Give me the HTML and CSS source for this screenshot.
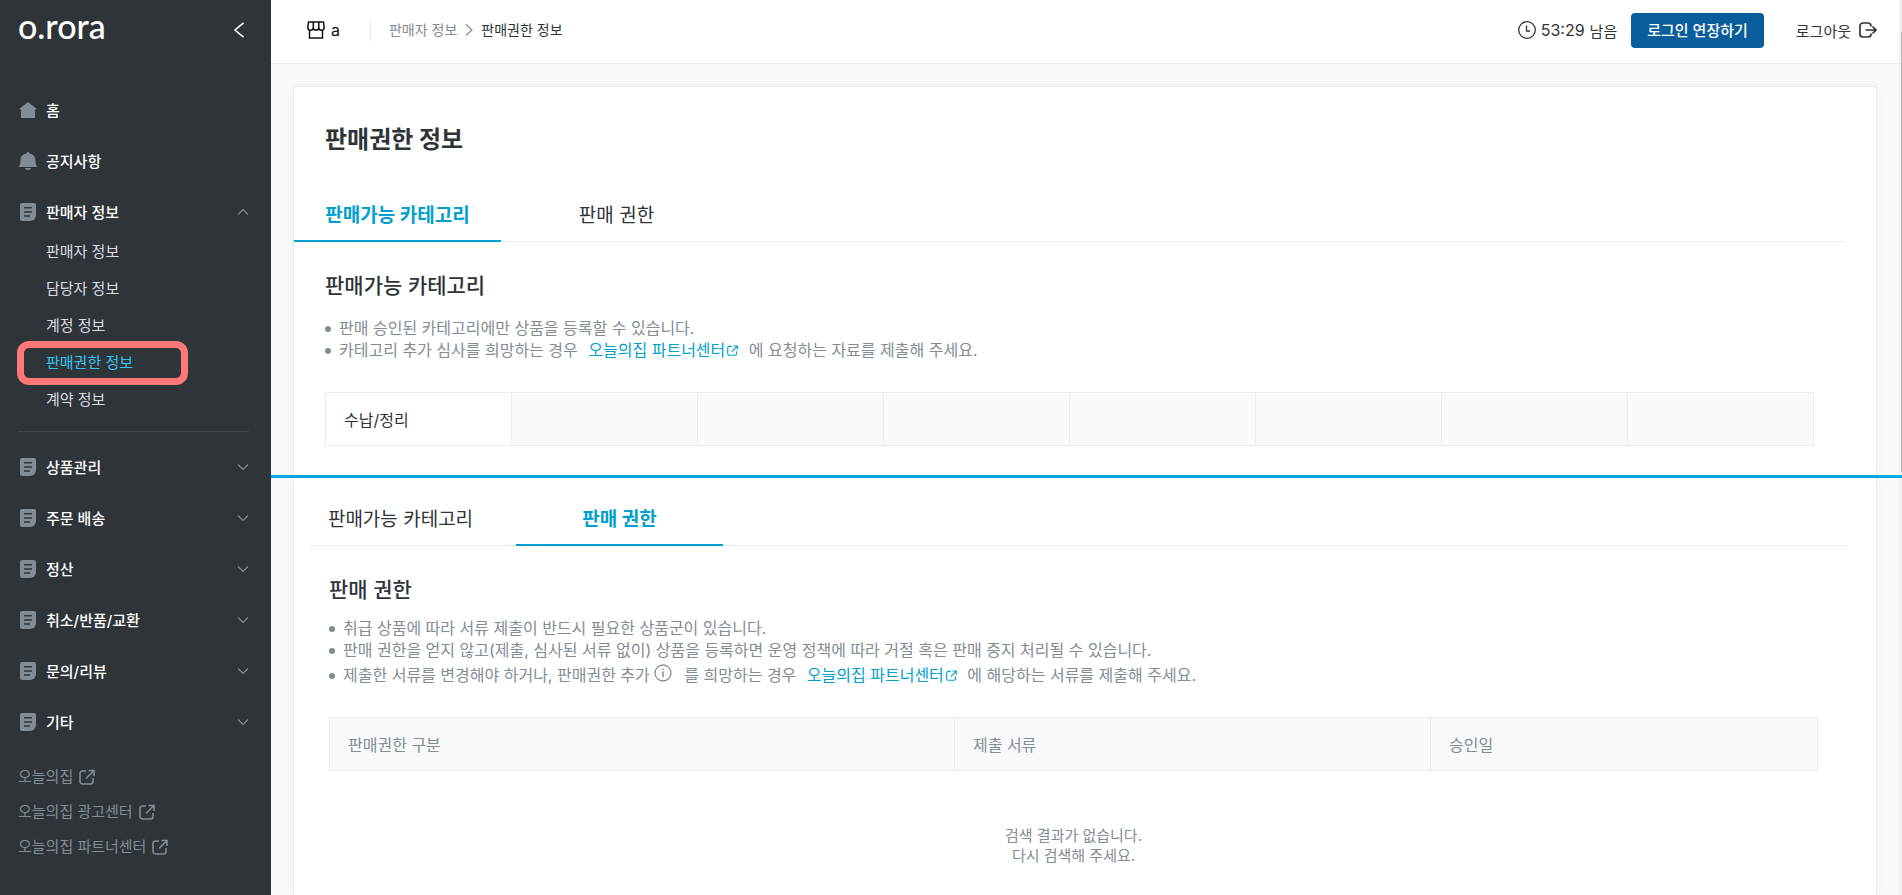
FILE: index.html
```html
<!DOCTYPE html>
<html lang="ko">

<head>
  <meta charset="UTF-8" />
  <title>판매권한 정보 - o.rora</title>
  <meta name="viewport" content="width=device-width, initial-scale=1.0" />
  <link rel="stylesheet" href="styles.css">
</head>

<body>
  <!-- 공용 아이콘 -->
  <svg class="sprite" aria-hidden="true">
    <symbol id="icon-doc" viewBox="0 0 18 18">
      <path fill="#828c94" d="M3 0h12a2 2 0 0 1 2 2v10a6 6 0 0 1-6 6H3a2 2 0 0 1-2-2V2a2 2 0 0 1 2-2z" />
      <path stroke="#2f3438" stroke-width="1.4" d="M5 4.8h8M5 9h8M5 13h6" />
    </symbol>
    <symbol id="icon-down" viewBox="0 0 12 8">
      <path fill="none" stroke="#828c94" stroke-width="1.2" d="M1 1.5l5 5 5-5" />
    </symbol>
    <symbol id="icon-link" viewBox="0 0 16 16">
      <path fill="none" stroke="currentColor" stroke-width="1.6" d="M7 2H3.5A2.5 2.5 0 0 0 1 4.5v8A2.5 2.5 0 0 0 3.5 15h8a2.5 2.5 0 0 0 2.5-2.5V9M9.5 1.5H15V7M14.5 2L7 9.5" />
    </symbol>
  </svg>

  <aside class="sidebar">
    <div class="sidebar-top">
      <a class="logo" href="#">o.rora</a>
      <button class="fold-btn" aria-label="메뉴 접기">
        <svg width="12" height="16" viewBox="0 0 12 16"><path fill="none" stroke="#fff" stroke-width="1.6" d="M10.5 0.8L2 8l8.5 7.2" /></svg>
      </button>
    </div>

    <nav>
      <ul class="menu">
        <li>
          <a class="menu-item" href="#">
            <svg class="menu-icon" viewBox="0 0 18 18"><path fill="#828c94" d="M9 1l8.5 6.8-.6 1H16V16a1 1 0 0 1-1 1H3a1 1 0 0 1-1-1V8.8h-.9l-.6-1z" /></svg>
            홈
          </a>
        </li>
        <li>
          <a class="menu-item" href="#">
            <svg class="menu-icon" viewBox="0 0 18 18"><path fill="#828c94" d="M9 0c.8 0 1.2.5 1.3 1.2C14.500 2 16.500 5 16.500 8.500c0 2.500.3 4 1.200 5.300.4.700.2 1.200-.6 1.200H.9c-.8 0-1-.5-.6-1.200 .9-1.300 1.200-2.800 1.200-5.300C1.500 5 3.500 2 7.700 1.200 7.800.5 8.200 0 9 0zM6 16h6c-.4 1.300-1.500 2-3 2s-2.600-.7-3-2z" /></svg>
            공지사항
          </a>
        </li>
        <li>
          <a class="menu-item" href="#">
            <svg class="menu-icon"><use href="#icon-doc" /></svg>
            판매자 정보
            <svg class="arrow open"><use href="#icon-down" /></svg>
          </a>
          <ul class="submenu">
            <li><a href="#">판매자 정보</a></li>
            <li><a href="#">담당자 정보</a></li>
            <li><a href="#">계정 정보</a></li>
            <li class="current"><a href="#">판매권한 정보</a></li>
            <li><a href="#">계약 정보</a></li>
          </ul>
        </li>
      </ul>

      <ul class="menu menu-rest">
        <li><a class="menu-item" href="#"><svg class="menu-icon"><use href="#icon-doc" /></svg>상품관리<svg class="arrow"><use href="#icon-down" /></svg></a></li>
        <li><a class="menu-item" href="#"><svg class="menu-icon"><use href="#icon-doc" /></svg>주문 배송<svg class="arrow"><use href="#icon-down" /></svg></a></li>
        <li><a class="menu-item" href="#"><svg class="menu-icon"><use href="#icon-doc" /></svg>정산<svg class="arrow"><use href="#icon-down" /></svg></a></li>
        <li><a class="menu-item" href="#"><svg class="menu-icon"><use href="#icon-doc" /></svg>취소/반품/교환<svg class="arrow"><use href="#icon-down" /></svg></a></li>
        <li><a class="menu-item" href="#"><svg class="menu-icon"><use href="#icon-doc" /></svg>문의/리뷰<svg class="arrow"><use href="#icon-down" /></svg></a></li>
        <li><a class="menu-item" href="#"><svg class="menu-icon"><use href="#icon-doc" /></svg>기타<svg class="arrow"><use href="#icon-down" /></svg></a></li>
      </ul>
    </nav>

    <div class="outlinks">
      <a href="#">오늘의집 <svg><use href="#icon-link" /></svg></a>
      <a href="#">오늘의집 광고센터 <svg><use href="#icon-link" /></svg></a>
      <a href="#">오늘의집 파트너센터 <svg><use href="#icon-link" /></svg></a>
    </div>
  </aside>

  <div class="page">
    <header class="topbar">
      <div class="store">
        <svg width="18" height="18" viewBox="0 0 18 18"><path fill="none" stroke="#111" stroke-width="1.5" d="M1.5 1h15l.7 5.5a2.6 2.6 0 0 1-5.400 0 2.700 2.700 0 0 1-5.500 0 2.600 2.600 0 0 1-5.500 0zM6.300 1v5.500M11.800 1v5.500M2.500 9v8h13V9" /></svg>
        <span>a</span>
      </div>
      <div class="breadcrumb">
        <a href="#">판매자 정보</a>
        <svg width="8" height="12" viewBox="0 0 8 12"><path fill="none" stroke="#828c94" stroke-width="1.2" d="M1 0.5L7 6l-6 5.5" /></svg>
        <span>판매권한 정보</span>
      </div>
      <div class="session">
        <svg width="18" height="18" viewBox="0 0 18 18"><g fill="none" stroke="#2f3438" stroke-width="1.3"><circle cx="9" cy="9" r="8.3" /><path d="M8.500 4.500V10H12" /></g></svg>
        <span class="time">53:29</span>
        <span>남음</span>
      </div>
      <button class="extend-btn">로그인 연장하기</button>
      <a class="logout" href="#">
        로그아웃
        <svg width="18" height="16" viewBox="0 0 18 16"><path fill="none" stroke="#2f3438" stroke-width="1.7" d="M12 4.500V4a3 3 0 0 0-3-3H4a3 3 0 0 0-3 3v8a3 3 0 0 0 3 3h5a3 3 0 0 0 3-3v-.5M6.500 8H17M13.500 4.500L17 8l-3.500 3.500" /></svg>
      </a>
    </header>

    <!-- 판매가능 카테고리 -->
    <main class="panels">
      <section class="panel panel-category">
        <div class="card">
          <h1>판매권한 정보</h1>
          <div class="tabs" role="tablist">
            <button class="tab active" role="tab">판매가능 카테고리</button>
            <button class="tab" role="tab">판매 권한</button>
          </div>
          <div class="card-body">
            <h2>판매가능 카테고리</h2>
            <ul class="guide">
              <li>판매 승인된 카테고리에만 상품을 등록할 수 있습니다.</li>
              <li>카테고리 추가 심사를 희망하는 경우 <a href="#">오늘의집 파트너센터<svg><use href="#icon-link" /></svg></a> 에 요청하는 자료를 제출해 주세요.</li>
            </ul>
            <table class="category-table">
              <tr>
                <td>수납/정리</td>
                <td></td>
                <td></td>
                <td></td>
                <td></td>
                <td></td>
                <td></td>
                <td></td>
              </tr>
            </table>
          </div>
        </div>
      </section>

      <!-- 판매 권한 -->
      <section class="panel panel-auth">
        <div class="card">
          <div class="tabs" role="tablist">
            <button class="tab" role="tab">판매가능 카테고리</button>
            <button class="tab active" role="tab">판매 권한</button>
          </div>
          <div class="card-body">
            <h2>판매 권한</h2>
            <ul class="guide">
              <li>취급 상품에 따라 서류 제출이 반드시 필요한 상품군이 있습니다.</li>
              <li>판매 권한을 얻지 않고(제출, 심사된 서류 없이) 상품을 등록하면 운영 정책에 따라 거절 혹은 판매 중지 처리될 수 있습니다.</li>
              <li class="tall">제출한 서류를 변경해야 하거나, 판매권한 추가<svg class="info" viewBox="0 0 18 18"><circle cx="9" cy="9" r="8" fill="none" stroke="#828c94" stroke-width="1.3" /><path stroke="#828c94" stroke-width="1.5" d="M9 7.500V13M9 4.500v1.600" /></svg> 를 희망하는 경우 <a href="#">오늘의집 파트너센터<svg><use href="#icon-link" /></svg></a> 에 해당하는 서류를 제출해 주세요.</li>
            </ul>
            <table class="auth-table">
              <thead>
                <tr>
                  <th class="col-type">판매권한 구분</th>
                  <th class="col-doc">제출 서류</th>
                  <th class="col-date">승인일</th>
                </tr>
              </thead>
              <tbody>
                <tr>
                  <td class="empty" colspan="3">검색 결과가 없습니다.<br />다시 검색해 주세요.</td>
                </tr>
              </tbody>
            </table>
          </div>
        </div>
      </section>
    </main>
  </div>

  <div class="scrollbar"><div class="thumb"></div></div>
</body>

</html>
```

FILE: styles.css
```css
*,
*::before,
*::after {
  box-sizing: border-box;
}

body {
  margin: 0;
  display: flex;
  min-height: 100vh;
  background: #f7f9fa;
  color: #2f3438;
  font-family: Inter, "Noto Sans CJK KR", sans-serif;
  font-size: 15px;
}

a {
  color: inherit;
  text-decoration: none;
}

ul {
  margin: 0;
  padding: 0;
  list-style: none;
}

button {
  padding: 0;
  border: 0;
  background: none;
  color: inherit;
  font: inherit;
  cursor: pointer;
}

.sprite {
  display: none;
}

/* 사이드바 */
.sidebar {
  flex: 0 0 271px;
  padding: 0 22px 0 18px;
  background: #2f3438;
  color: #fff;
}

.sidebar-top {
  display: flex;
  justify-content: space-between;
  align-items: center;
  height: 60px;
  margin-bottom: 24px;
  padding-right: 4px;
}

.logo {
  font-family: Lato, sans-serif;
  font-size: 34px;
  font-weight: 500;
  line-height: 32px;
  padding-bottom: 8px;
}

.fold-btn {
  display: flex;
}

.menu-item {
  display: flex;
  align-items: center;
  height: 51px;
  padding-left: 1px;
  font-weight: 500;
}

.menu-icon {
  width: 18px;
  height: 18px;
  margin-right: 9px;
}

.arrow {
  width: 12px;
  height: 8px;
  margin-left: auto;
}

.arrow.open {
  transform: rotate(180deg);
}

.submenu {
  margin-top: -4px;
  padding-bottom: 13px;
  border-bottom: 1px solid #424649;
}

.submenu li {
  position: relative;
  padding-left: 28px;
  line-height: 37px;
  color: #dadde0;
}

.submenu li.current {
  color: #35c5f0;
}

/* 현재 메뉴 강조 테두리 */
.submenu li.current::after {
  content: "";
  position: absolute;
  top: -3px;
  left: -1px;
  width: 171px;
  height: 44px;
  border: 7px solid #ff7777;
  border-radius: 12px;
  pointer-events: none;
}

.menu-rest {
  padding-top: 9px;
}

.outlinks {
  display: flex;
  flex-direction: column;
  padding-top: 12px;
  line-height: 35px;
  color: #828c94;
}

.outlinks a {
  display: flex;
  align-items: center;
  gap: 6px;
}

.outlinks svg {
  width: 16px;
  height: 16px;
}

/* 상단 바 */
.page {
  flex: 1;
  display: flex;
  flex-direction: column;
  min-width: 0;
}

.topbar {
  display: flex;
  align-items: center;
  height: 64px;
  margin-right: 3px;
  padding: 0 22px 3px 36px;
  border-bottom: 1px solid #eaedef;
  background: #fff;
}

.store {
  display: flex;
  align-items: center;
  gap: 6px;
  padding-right: 30px;
  font-size: 16px;
  color: #111;
}

.breadcrumb {
  display: flex;
  align-items: center;
  gap: 8px;
  padding-left: 18px;
  border-left: 1px solid #eaedef;
  font-size: 14px;
  line-height: 22px;
}

.breadcrumb a {
  color: #828c94;
}

.session {
  display: flex;
  align-items: center;
  gap: 5px;
  margin-left: auto;
}

.time {
  font-size: 16px;
}

.extend-btn {
  height: 35px;
  margin: 0 32px 0 14px;
  padding: 0 16px 2px;
  border-radius: 4px;
  background: #0a5e9c;
  color: #fff;
  font-weight: 500;
}

.logout {
  display: flex;
  align-items: center;
  gap: 8px;
}

/* 본문 */
.panels {
  flex: 1;
  display: flex;
  flex-direction: column;
}

.panel {
  padding: 0 25px 0 22px;
}

.panel-category {
  position: relative;
  z-index: 1;
  padding-top: 22px;
  border-bottom: 3px solid #00a9e0;
}

.panel-auth {
  flex: 1;
  display: flex;
}

.card {
  width: 100%;
  border: 1px solid #eaedef;
  border-width: 0 1px;
  background: #fff;
  box-shadow: 0 0 8px rgba(63, 71, 77, 0.05);
}

.panel-category .card {
  padding-top: 35px;
  border-top-width: 1px;
  border-radius: 4px 4px 0 0;
}

.panel-auth .card {
  padding-top: 12px;
}

h1 {
  margin: 0 31px 28px;
  font-size: 24px;
  line-height: 36px;
  font-weight: 700;
}

.tabs {
  display: flex;
  gap: 12px;
  margin-right: 31px;
  box-shadow: inset 0 -1px #eaedef;
}

.panel-auth .tabs {
  margin-left: 16px;
  margin-right: 28px;
}

.panel-auth .tab:first-child {
  margin-left: -13px;
}

.tab {
  width: 207px;
  height: 56px;
  border-bottom: 2px solid transparent;
  font-size: 19px;
}

.tab.active {
  border-color: #009fce;
  color: #009fce;
  font-weight: 700;
}

.card-body {
  padding: 28px 62px 29px 31px;
}

.panel-auth .card-body {
  padding: 28px 58px 0 35px;
}

h2 {
  margin: 0 0 15px;
  font-size: 21px;
  line-height: 32px;
  font-weight: 500;
}

.guide {
  margin-bottom: 31px;
  font-size: 16px;
  line-height: 22px;
  color: #828c94;
}

.panel-auth h2 {
  margin-bottom: 11px;
}

.panel-auth .guide {
  margin-bottom: 28px;
}

.guide li {
  position: relative;
  padding-left: 14px;
}

.guide li.tall {
  line-height: 28px;
}

.guide li::before {
  content: "";
  position: absolute;
  top: 50%;
  left: 0;
  width: 6px;
  height: 6px;
  margin-top: -2px;
  border-radius: 50%;
  background: #828c94;
}

.guide a {
  margin: 0 6px;
  color: #009fce;
}

.guide a svg {
  width: 11px;
  height: 11px;
  margin-left: 2px;
}

.guide .info {
  width: 18px;
  height: 18px;
  margin: 0 8px 0 4px;
  vertical-align: -1px;
}

/* 표 */
table {
  width: 100%;
  table-layout: fixed;
  border-collapse: collapse;
  font-size: 16px;
}

.category-table td,
.auth-table th {
  height: 53px;
  padding: 0 18px;
  border: 1px solid #eaedef;
  background: #f7f9fa;
  text-align: left;
  font-weight: 400;
}

.category-table td:first-child {
  background: #fff;
}

.auth-table {
  color: #828c94;
}

.col-type {
  width: 42%;
}

.col-doc {
  width: 32%;
}

.col-date {
  width: 26%;
}

.auth-table .empty {
  padding: 55px 0 0;
  font-size: 15px;
  line-height: 20px;
  text-align: center;
}

/* 오른쪽 스크롤바 */
.scrollbar {
  position: absolute;
  top: 0;
  right: 0;
  bottom: 0;
  width: 3px;
  padding: 32px 0 0 2px;
  background: #f0f0f1;
}

.scrollbar .thumb {
  height: 440px;
  background: #b9b9b9;
}
```
